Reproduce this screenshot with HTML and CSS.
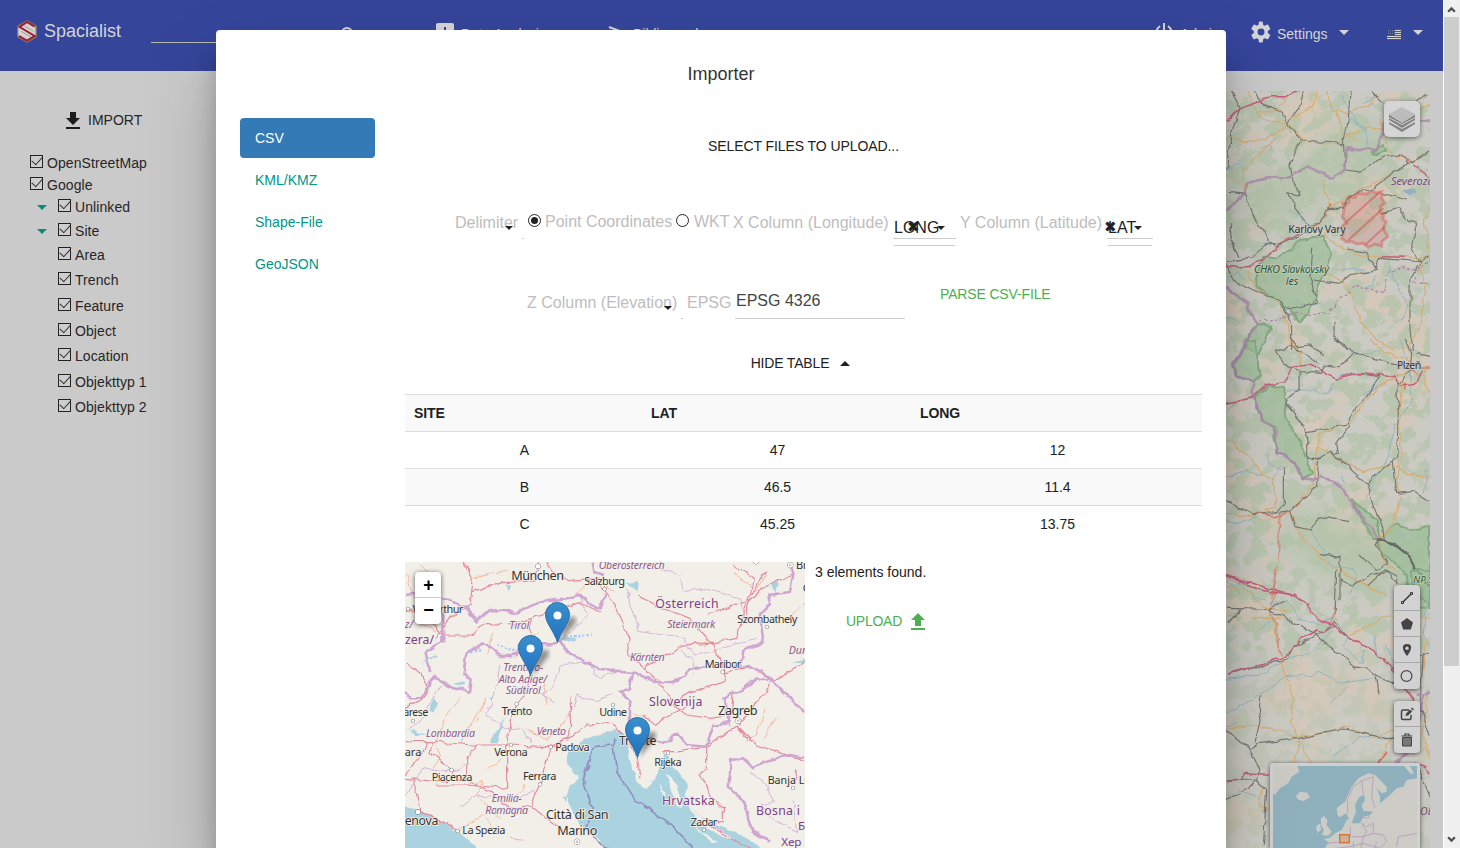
FILE: index.html
```html
<!DOCTYPE html>
<html lang="en">
<head>
<meta charset="utf-8">
<title>Spacialist</title>
<link rel="stylesheet" href="styles.css">
</head>
<body>
<div class="window">
  <div class="page">
    <header class="navbar">
      <svg class="brand-logo" viewBox="0 0 60 69"><path d="M30 1 59 17V52L30 68 1 52V17Z" fill="#a08a68"/><path d="M30 8 55 20V49L30 62 4 49V20Z" fill="#d5d2d2"/><path d="M4 20 30 5 56 20M4 49 30 64 56 49" fill="none" stroke="#8a6a58" stroke-width="6"/><path d="M52 19 30 6 8 21 53 48 30 62 6 48" fill="none" stroke="#981f34" stroke-width="6"/><path d="M12 34 42 51M22 18 50 34" stroke="#a08a68" stroke-width="2"/></svg>
      <span class="brand">Spacialist</span>
      <span class="search-line"></span>
      <svg class="search-icon" viewBox="0 0 18 18"><circle cx="7" cy="7" r="5" fill="none" stroke="#d4d4d8" stroke-width="2"/><path d="m11 11 6 6" stroke="#d4d4d8" stroke-width="2"/></svg>
      <a class="nav-item nav-analysis"><svg viewBox="0 0 18 18"><path d="M2 0H16Q18 0 18 2V16Q18 18 16 18H2Q0 18 0 16V2Q0 0 2 0Z" fill="#d4d4d8"/><path d="M5 8V14M9 4V14M13 10V14" stroke="#35459a" stroke-width="2"/></svg>Data Analysis</a>
      <a class="nav-item nav-library"><svg viewBox="0 0 18 18"><path d="M1 2 17 8M1 9 17 9M1 14 17 14" stroke="#d4d4d8" stroke-width="2"/></svg>Bibliography</a>
      <a class="nav-item nav-admin"><svg viewBox="0 0 18 18"><path d="M5 3A7.500 7.500 0 1 0 13 3M9 0V9" fill="none" stroke="#d4d4d8" stroke-width="2"/></svg>Admin</a>
      <a class="nav-item nav-settings"><svg viewBox="0 0 24 24"><path fill="#d4d4d8" d="M19.4 13a7.500 7.500 0 0 0 0-2l2.500-2a.6.6 0 0 0 .1-.8l-2.300-4a.6.6 0 0 0-.7-.3l-3 1.200a8 8 0 0 0-1.700-1L13.900 1a.6.600 0 0 0-.6-.5h-3a.6.6 0 0 0-.6.5L9.300 4.100a8 8 0 0 0-1.700 1L4.600 3.900a.6.6 0 0 0-.7.3l-2.300 4a.6.6 0 0 0 .1.8l2.500 2a8 8 0 0 0 0 2l-2.500 2a.6.600 0 0 0-.1.800l2.300 4c.1.300.4.300.700.200l3-1.200a8 8 0 0 0 1.700 1l.4 3.200c.1.300.300.500.600.500h3c.3 0 .600-.2.600-.5l.4-3.200a8 8 0 0 0 1.700-1l3 1.200c.3.100.6 0 .7-.2l2.300-4a.6.600 0 0 0-.1-.8zM12 15.800a3.800 3.800 0 1 1 0-7.600 3.800 3.800 0 0 1 0 7.600z"/></svg>Settings<i class="caret"></i></a>
      <a class="nav-item nav-lang"><svg class="flag" viewBox="0 0 14 11"><path fill="#d5d5d5" d="M0 0H14V11H0Z"/><path d="M0 .5H14M0 2.500H14M0 4.500H14M0 6.500H14M0 8.500H14M0 10.500H14" stroke="#a83440"/><path fill="#35457c" d="M0 0H8V6H0Z"/><path d="M1 1.500H8M1 3H8M1 4.500H8" stroke="#9ba3c4" stroke-width=".6" stroke-dasharray="1 1"/></svg><i class="caret"></i></a>
    </header>
    <main class="body">
      <aside class="sidebar">
        <a class="import"><svg viewBox="0 0 14 17"><path d="M4 0H10V6H14L7 13 0 6H4ZM0 15H14V17H0Z" fill="#1c1c1c"/></svg>IMPORT</a>
        <div class="tree">
          <label><input type="checkbox" checked>OpenStreetMap</label>
          <label><input type="checkbox" checked>Google</label>
          <label class="child"><i class="caret"></i><input type="checkbox" checked>Unlinked</label>
          <label class="child"><i class="caret"></i><input type="checkbox" checked>Site</label>
          <label class="child leaf"><input type="checkbox" checked>Area</label>
          <label class="child leaf"><input type="checkbox" checked>Trench</label>
          <label class="child leaf"><input type="checkbox" checked>Feature</label>
          <label class="child leaf"><input type="checkbox" checked>Object</label>
          <label class="child leaf"><input type="checkbox" checked>Location</label>
          <label class="child leaf"><input type="checkbox" checked>Objekttyp 1</label>
          <label class="child leaf"><input type="checkbox" checked>Objekttyp 2</label>
        </div>
      </aside>
      <section class="main-map">
        <svg class="map-canvas" viewBox="1226 91 204 757">
          <defs>
            <filter id="rough" x="-5%" y="-5%" width="110%" height="110%" color-interpolation-filters="sRGB"><feTurbulence type="fractalNoise" baseFrequency=".028" numOctaves="2" seed="4"/><feDisplacementMap in="SourceGraphic" scale="20" xChannelSelector="R" yChannelSelector="G"/></filter>
            <filter id="wood" x="0" y="0" width="100%" height="100%" color-interpolation-filters="sRGB"><feTurbulence type="fractalNoise" baseFrequency=".06" numOctaves="4" seed="12"/><feColorMatrix values="0 0 0 0 .706  0 0 0 0 .769  0 0 0 0 .667  0 0 0 12 -5.800"/><feComposite in2="SourceGraphic" operator="in"/></filter>
            <filter id="soil" x="0" y="0" width="100%" height="100%" color-interpolation-filters="sRGB"><feTurbulence type="fractalNoise" baseFrequency=".018" numOctaves="3" seed="31"/><feColorMatrix values="0 0 0 0 .827  0 0 0 0 .784  0 0 0 0 .725  0 0 0 6 -3"/></filter>
            <filter id="soft"><feGaussianBlur stdDeviation="12"/></filter>
          </defs>
          <rect x="1226" y="91" width="204" height="757" fill="#cbcac3"/>
          <rect x="1226" y="91" width="204" height="757" filter="url(#soil)"/>
          <g fill="#b4c4aa" filter="url(#soft)" opacity=".8"><path d="M1226 185 1300 165 1350 120 1400 130 1380 170 1330 190 1310 215 1260 225 1240 200ZM1290 500 1340 520 1385 540 1430 535V580L1350 590 1290 560Z"/></g>
          <rect x="1226" y="91" width="204" height="560" filter="url(#wood)" opacity=".75"/>
          <rect x="1226" y="651" width="204" height="197" filter="url(#wood)" opacity=".35"/>

          <g class="lines" transform="translate(1220 90) scale(.33333)" filter="url(#rough)">
            <path class="park" d="M108 565 130 500 165 505 205 480 240 450 310 440 335 500 300 580 280 640 240 700 205 655 150 620 110 590Z"/>
            <path class="park" d="M75 770 85 735 110 700 150 710 135 750 115 790Z"/>
            <path class="park" d="M455 188 490 165 498 180 470 195Z"/>
            <path class="water" d="M18 240 50 225 70 240M120 175 145 165 155 178M360 20 410 90 440 130 440 170M430 40 470 20M390 80 440 120M20 560 60 545 70 570M250 400 240 380 210 360M350 540 400 535 460 545M510 530 540 600 560 650 545 690M470 560 440 600M360 370 370 400M20 680 60 700M215 620 260 650 300 640"/>
            <path d="M125 460 155 455 150 465ZM550 300 590 295 595 308 565 318Z" fill="#8fb3c4"/>
            <path class="road" d="M80 0 100 50 130 90 200 100 240 70 280 50 290 0M18 135 80 155 130 150 180 120 200 100 250 150 350 165 400 130 440 110 500 125 560 90 630 40M320 0 340 60 380 70 440 50 480 10M350 60 370 130 410 150M75 310 70 240 110 200 170 140M200 20 170 60 110 70M310 270 325 330 320 360M310 430 370 480 430 500 520 498 630 505M300 545 360 570 400 620 420 690 470 750 520 780M80 540 110 600 180 640 205 700 215 780M590 505 620 600 600 700 560 780M480 90 510 190 570 215M630 350 610 400 630 480M335 350 420 300 520 250"/>
            <path class="red" d="M320 370 300 400 280 410M330 345 320 365M530 195 570 215 600 205"/>
            <path class="rail" d="M30 0 60 50 40 110 25 180 18 260M100 0 140 50 190 70 200 105 245 150 330 155 370 165 385 90 390 0M250 0 240 50 200 100M245 155 210 220 220 280 240 320 205 310 235 370 270 410 300 400 325 355 365 355 400 310 450 300 520 250 570 220 630 180M370 150 375 240 420 245 490 200 540 195 570 225M75 310 110 400 150 450 165 470 210 450 280 420M18 310 75 315M18 515 90 505 150 455 165 460M18 520 40 570 100 600 190 640 215 700 215 780M275 470 270 560 290 640 205 660M280 570 360 580 400 550 465 540 475 505 600 515 630 500M480 370 540 350 560 390 590 400 575 470 600 520 570 560 570 650 570 720 580 780M490 310 560 330M380 480 440 490 470 540M450 0 500 50 560 60 620 10M345 695 345 740 380 780M35 400 30 450 60 500"/>
            <path class="motor" d="M18 95 50 60 90 45 150 20 205 20 235 0M18 530 90 530 140 500 170 465 240 430M480 500 550 502M580 225 630 262"/>
            <path class="border" d="M18 365 40 340 75 310 85 275 140 265 210 265 260 225 340 265 370 240 380 175 470 180 500 90M18 595 50 620 80 640 90 670 115 700 80 745 75 780M600 90 630 85"/>
            <path class="dash" d="M120 695 180 690 220 670 330 670 350 630 410 590 490 610 500 550 550 530 590 545 580 580 630 580M590 540 630 510"/>
          </g>
          <g transform="translate(1220 90) scale(.33333)" stroke="#d34b4b">
            <path d="M372 360 368 340 385 338 388 320 405 322 410 310 440 312 455 303 470 310 485 305 485 325 494 340 482 348 480 365 492 372 488 388 498 395 490 415 503 440 485 455 485 468 465 462 445 472 430 460 410 462 395 454 380 456 365 445 372 425 362 412 380 400 368 380Z" fill="#d34b4b" fill-opacity=".16" stroke-opacity=".4" stroke-width="9"/>
            <path d="M375 400 480 305M385 450 490 355M435 465 495 410" stroke-opacity=".5" stroke-width="6"/>
          </g>
          <g class="lines" transform="translate(1220 340) scale(.33333)" filter="url(#rough)">
            <path class="park" d="M75 0 65 40 35 70 50 110 95 125 120 105 115 50 105 0Z"/>
            <path class="park" d="M103 175 150 135 190 145 200 240 240 310 280 400 245 415 225 370 170 340 160 265 125 240Z"/>
            <path class="park" d="M470 600 530 550 570 570 630 560V800H570L560 700 485 640Z"/>
            <path class="park" d="M395 480 470 540 480 600 460 600Z"/>
            <path class="water" d="M18 410 80 390 160 420 180 380 200 380M18 210 50 190M200 150 280 150 320 160 350 110 400 100M18 540 60 550 110 530M140 340 145 365 200 400M540 0 570 80 575 180 520 270 500 360 455 430 440 480M400 50 480 30M270 570 300 620 340 680 400 690 410 720 390 760M530 570 560 600M620 390 610 460M18 720 60 760M380 440 360 410M430 160 500 130"/>
            <path class="road" d="M18 300 90 350 130 410 160 420 165 500 90 530 18 520M210 0 240 40 240 90M450 0 500 40 560 60 620 90M570 90 490 125 430 190 390 250 300 280 290 350 280 430 210 520 250 600 350 690 480 760M295 325 380 370 430 395 520 370 560 400 630 415M530 140 545 350 530 430 540 470 520 560 480 590 490 670 530 690M550 110 545 170 530 210M610 100 630 180M490 690 440 740"/>
            <path class="red" d="M280 450 220 510 180 530 110 520M555 125 555 155M600 78 630 78M560 80 600 110"/>
            <path class="red thin" d="M180 520 175 650 155 780"/>
            <path class="rail" d="M165 35 200 80 240 95 300 100 310 75 360 80 400 40 470 55 560 80 600 70M165 35 215 20 300 70M215 0 230 20 270 15 310 45M345 0 400 35M555 0 575 40 570 90 530 140 535 220 530 350 440 430 360 360 330 340 295 355 260 355 260 275 240 240 195 190 200 175 240 150 240 95M260 275 380 255 410 200 440 170 480 110 410 100M390 255 350 310 355 340 330 345M18 480 100 525 170 515 190 500 190 380M175 520 210 515 240 490 290 440 295 360M210 520 225 560 270 570 300 530 390 545M440 430 460 500 485 560 490 600 465 610 500 670 470 695 420 645M300 640 360 650 360 780M500 690 530 710 530 740M520 360 530 460 580 455 630 485M590 40 630 50M500 685 440 740"/>
            <path class="motor" d="M18 190 95 175 140 135 190 125 220 80 270 75 350 115 410 100 520 110 540 135 590 130 610 90M18 705 90 730 150 750 200 755 245 785"/>
            <path class="border" d="M75 0 65 40 40 70 50 110 98 125 103 175 125 240 165 265 170 340 225 370 245 415 290 420 300 410 345 420 385 480 460 570 475 600"/>
            <path d="M475 600 520 610 560 640 590 690 630 740" fill="none" stroke="#646b64" stroke-width="8"/>
          </g>
          <g class="lines" transform="translate(1220 570) scale(.33333)" filter="url(#rough)">
            <path class="park" d="M575 0 580 60 630 100V0Z"/>
            <path class="water" d="M18 25 60 40 90 70 150 100 200 90 240 150 300 160 340 140 380 200 370 230 430 280 430 240M18 430 70 400 130 370 200 320 310 310 360 340 470 325 465 310M385 345 330 400M18 325 120 315 200 270 270 250 330 190M18 470 50 460M20 690 60 660 110 680M340 560 420 500 520 510M620 90 610 190 630 230M500 220 520 300M460 190 470 250M120 180 150 150"/>
            <path class="road" d="M18 50 80 60 130 110 200 120 160 150 170 200 185 270 220 390 215 460 240 510 220 580M18 480 90 465 180 480 240 510 270 580M390 190 440 170 500 135 630 145M430 40 500 80M530 490 500 530 470 580M130 650 120 710 150 720M185 145 100 145M620 200 610 300M400 480 470 500 520 480M620 360 610 500 630 560M240 500 330 485 390 470"/>
            <path class="red thin" d="M165 0 155 120 170 180 185 270M325 160 340 130 350 90"/>
            <path class="rail" d="M18 115 150 118 280 190 340 235 400 290 440 295 500 340 540 340M18 315 120 290 200 270 220 230 290 195 345 170M345 130 350 0M18 480 60 510 90 540 120 520 240 505 300 490 370 480 430 490 500 505 530 505M125 380 115 420 120 450 105 520M90 540 120 600 110 630 18 632M110 630 140 660 130 830M110 630 60 670 18 690M465 320 475 370M360 30 400 50 440 20 500 0 530 40M190 90 150 120M18 165 60 120M610 250 600 400 630 500M630 245 600 260M590 580 630 680M335 155 390 205"/>
            <path class="motor" d="M18 12 90 50 150 65 200 70 260 100 290 140 330 165 400 210 470 250 510 290 580 390 590 500M18 315 100 290 190 265 240 210 290 180 315 185 340 155M18 635 60 630 70 610 120 615 150 615M470 580 500 545M590 580 620 590 630 610"/>
            <path class="border" d="M590 375 630 370M610 370 600 430 560 540 530 580" stroke="#7e6590"/>
          </g>
          <g class="map-text dim" font-size="32">
            <g transform="translate(1220 90) scale(.33333)"><text x="205" y="428" textLength="172">Karlovy Vary</text><text class="park-name" x="102" y="549" textLength="225">CHKO Slavkovský</text><text class="park-name" x="197" y="584">les</text><text class="region" x="513" y="286" font-size="33">Severozápad</text></g>
            <g transform="translate(1220 340) scale(.33333)"><text x="531" y="87" textLength="73">Plzeň</text><text class="park-name" x="580" y="728" font-size="29">NP Š</text></g>
            <g transform="translate(1220 570) scale(.33333)"><text class="region" x="600" y="735">Oberösterreich</text></g>
          </g>
        </svg>
        <div class="layers"><svg viewBox="0 0 26 26"><path d="M0 18 13 26 26 18V16L13 23 0 16Z" fill="#858585"/><path d="M0 14 13 22 26 14V12L13 19 0 12Z" fill="#858585"/><path d="M0 9 13 17 26 9V8L13 1 0 8Z" fill="#bcbcbc"/><path d="M0 9 13 17 26 9V11L13 18 0 11Z" fill="#777"/></svg></div>
        <div class="tools draw-tools">
          <i><svg viewBox="0 0 14 14"><path d="M3 11 11 3" stroke="#333" stroke-width="1.500"/><path d="M1.500 10.500H3.500V12.500H1.500ZM10.500 1.500H12.500V3.500H10.500Z" fill="#ccc" stroke="#333"/></svg></i>
          <i><svg viewBox="0 0 14 14"><path d="M7 1 13 5.500 10.800 12.500H3.200L1 5.500Z" fill="#444"/></svg></i>
          <i><svg viewBox="0 0 14 14"><path d="M7 1C1 1 2 7 7 13 12 7 13 1 7 1Z" fill="#444"/><circle cx="7" cy="5.200" r="1.700" fill="#d0d0d0"/></svg></i>
          <i><svg viewBox="0 0 14 14"><circle cx="6.500" cy="7" r="5.400" fill="none" stroke="#444" stroke-width="1.200"/></svg></i>
        </div>
        <div class="tools edit-tools">
          <i><svg viewBox="0 0 14 14"><path d="M9 3H3Q1.500 3 1.500 4.500V11Q1.500 12.500 3 12.500H9.500Q11 12.500 11 11V8" fill="none" stroke="#444" stroke-width="1.500"/><path d="m5.500 9 .6-2.600 4-4 2 2-4 4ZM11 1.500l1-1 2 2-1 1Z" fill="#444"/></svg></i>
          <i><svg viewBox="0 0 14 14"><path d="M2.500 4.500H11.500V13H2.500Z" fill="#777" stroke="#444"/><path d="M1.500 3H12.500M5 2.500V1H9V2.500" fill="none" stroke="#444" stroke-width="1.200"/></svg></i>
        </div>
        <div class="overview"><svg viewBox="159 588 432 258">
          <rect x="159" y="588" width="432" height="258" fill="#8fb1bd"/>
          <g fill="#cccbc6">
            <path d="M159 588H232L238 605 215 620 205 640 180 655 165 675 159 670ZM228 678 240 665 262 668 270 682 250 693 232 688ZM303 745 312 738 322 750 320 765 335 785 325 797 305 795 312 780 303 765ZM288 770 300 760 303 780 292 788Z"/>
            <path d="M352 735 350 715 375 695 395 650 415 625 445 610 465 615 500 650 500 665 485 670 470 655 480 680 480 700 510 675 530 655 550 650 560 630 591 625V846H310L325 815 310 808 330 803 345 790 365 780 380 750 395 740 395 760 420 760 430 740 450 735 460 725 430 722 425 705 435 690 432 675 418 680 405 705 408 725 395 760 378 730 360 742Z"/>
            <path d="M553 588 570 610 582 612 570 588Z"/>
          </g>
          <path d="M383 730 382 690 400 650 425 632 430 675M425 632 460 620 455 680 465 715M420 740 445 745 450 725M425 760 440 770 460 760 460 790 490 795 500 815 480 835 430 820 390 830 345 835M390 770 392 800 365 815 320 820M530 830 535 800 591 790M395 800 430 800 440 785 425 760M400 815 400 846M460 790 430 800 420 846M470 815 460 846" fill="none" stroke="#b79bb9" stroke-width="2.500"/>
          <rect x="359" y="794" width="29" height="24" fill="#d5ad91" stroke="#c97935" stroke-width="4"/>
        </svg></div>
      </section>
    </main>
  </div>
  <div class="scrollbar"><svg viewBox="0 0 8 6"><path d="m1 5 3-3 3 3" fill="none" stroke="#505050" stroke-width="2"/></svg><div class="thumb"></div><svg viewBox="0 0 8 6"><path d="m1 1 3 3 3-3" fill="none" stroke="#505050" stroke-width="2"/></svg></div>
</div>

<div class="modal">
  <h1>Importer</h1>
  <div class="modal-body">
    <nav class="tabs"><a class="active">CSV</a><a>KML/KMZ</a><a>Shape-File</a><a>GeoJSON</a></nav>
    <div class="content">
      <div class="select-files">SELECT FILES TO UPLOAD...</div>
      <div class="form form-one">
        <span class="lbl delimiter">Delimiter<i class="caret over"></i></span><i class="stub"></i>
        <input type="radio" name="geo" checked><span class="lbl point">Point Coordinates</span>
        <input type="radio" name="geo"><span class="lbl wkt">WKT</span>
        <span class="lbl xcol">X Column (Longitude)</span>
        <span class="select long">LONG<b>✖</b><i class="caret"></i></span>
        <span class="lbl ycol">Y Column (Latitude)</span>
        <span class="select lat">LAT<b>✖</b><i class="caret"></i></span>
      </div>
      <div class="form form-two">
        <span class="lbl elevation">Z Column (Elevation)<i class="caret over"></i></span><i class="stub"></i>
        <span class="lbl epsg">EPSG</span><span class="epsg-input">EPSG 4326</span>
        <span class="parse">PARSE CSV-FILE</span>
      </div>
      <div class="hide-table">HIDE TABLE<i class="caret up"></i></div>
      <table>
        <tr><th class="c1">SITE</th><th class="c2">LAT</th><th>LONG</th></tr>
        <tr><td>A</td><td>47</td><td>12</td></tr>
        <tr><td>B</td><td>46.5</td><td>11.4</td></tr>
        <tr><td>C</td><td>45.25</td><td>13.75</td></tr>
      </table>
      <div class="result">
        <div class="mini-map">
          <svg class="map-canvas" viewBox="405 562 400 286">
            <defs>
              <filter id="rough2" x="-5%" y="-5%" width="110%" height="110%" color-interpolation-filters="sRGB"><feTurbulence type="fractalNoise" baseFrequency=".03" numOctaves="2" seed="9"/><feDisplacementMap in="SourceGraphic" scale="20" xChannelSelector="R" yChannelSelector="G"/></filter>
              <linearGradient id="pin" x2="0" y2="1"><stop stop-color="#3a8fcb"/><stop offset="1" stop-color="#2272c0"/></linearGradient>
              <filter id="pinblur"><feGaussianBlur stdDeviation="2"/></filter>
              <g id="marker"><path d="M2 0 16-17Q22-24 15-26 6-25 2 0Z" fill="#000" opacity=".4" filter="url(#pinblur)"/><path d="M0 0C-3-11-12-19-12-28A12 12 0 0 1 12-28C12-19 3-11 0 0Z" fill="url(#pin)" stroke="#2a6fa9"/><circle cy="-27" r="4" fill="#fff"/></g>
            </defs>
            <rect x="405" y="562" width="400" height="286" fill="#f2efe9"/>
            <g class="lines mini" transform="translate(400 555) scale(.33333)" filter="url(#rough2)">
              <path class="sea" d="M645 525 590 540 540 565 505 590 500 620 520 650 540 665 510 690 500 720 515 760 535 800 590 850 640 900 950 900 1100 900 1060 860 1000 830 910 790 870 760 860 720 860 690 830 650 810 610 790 590 780 640 760 680 740 705 720 690 700 650 685 610 690 570 670 535Z"/>
              <path class="sea" d="M0 745 40 760 80 775 130 800 170 830 210 860 250 900H0Z"/>
              <path d="M800 650 830 690 850 750 840 760 810 710ZM870 760 920 800 1000 850 980 850 900 810ZM780 680 790 720 800 725ZM870 810 950 860 940 865ZM880 730 900 750 890 755Z" fill="#f2efe9"/>
              <path class="lake" d="M315 490 300 530 290 565 275 565 275 545ZM100 430 115 440 100 475 90 465ZM190 535 200 530 180 575ZM30 530 45 525 75 540 50 540ZM320 85 335 90 325 110ZM160 390 200 380 190 395ZM450 240 530 250 520 260ZM1115 80 1135 75 1125 120ZM1180 320 1220 310 1215 322ZM680 85 720 78 715 110ZM485 730 500 720 500 740ZM65 330 105 300 110 305Z"/>
              <path d="M290 270 350 290M210 290 240 280M495 245 575 240M270 430 280 435" stroke="#a9c8fa" stroke-width="7" stroke-dasharray="7 6"/>
              <path class="minor" d="M60 30 100 60 90 110M220 70 260 60 320 50M130 240 60 210M280 230 260 300M420 230 370 260 380 340M530 120 580 70 640 110M180 430 130 500 110 570M200 530 260 430 230 500M430 380 440 450M510 480 440 560 380 520M100 560 120 600 100 640M200 690 250 680 230 720 300 790M310 610 260 640M700 480 740 480M1030 560 1070 540 1095 460M1090 550 1130 490M1170 190 1215 140M1000 50 1070 110 1100 60M20 60 40 130M750 360 800 390M840 270 940 260M180 820 250 780 300 840M350 720 380 690"/>
              <path class="highway" d="M190 20 220 70 215 110 310 80 400 75 420 20M215 110 210 150 150 190 110 250M15 170 60 160 130 240 210 240 250 205 340 210 390 190 470 165 540 140 600 170M390 190 395 270 400 350 360 440 330 500 320 570 320 700M15 460 60 440 90 400 60 350 20 330M15 560 90 560 220 570 330 570 450 575 510 550 560 510 640 505M15 660 70 590 80 560M100 560 90 590 160 650 270 710 330 760 390 750 420 690 450 580M390 750 450 800 510 840M230 570 200 610 200 670 110 680 15 670M40 670 60 770 130 800 180 830M320 700 200 690 110 690M510 430 515 510 500 560M440 20 470 60 510 80 600 70M600 90 650 160 690 250 680 300 730 340 780 310 850 270 930 265 1010 250 1040 150 1100 90 1180 60M715 120 760 150 870 190 940 270 970 340 980 380 910 400 870 410 820 450 860 480 930 490 1010 480M920 180 1040 140 1100 50M1000 30 1060 70 1040 180M730 340 770 380 820 440M860 455 790 490 770 515 730 480M970 350 1060 340 1120 380 1215 320M1120 380 1070 440 1050 480 1010 510 970 540 920 575 840 590 790 590M1010 510 1070 570 1215 620M1010 510 1040 550M920 575 920 640 900 665 930 720 970 760 970 800 930 800M640 510 690 560 710 610 720 670M1180 640 1190 670M930 810 990 850 1050 880M1000 410 990 510"/>
              <path class="province" d="M690 50 740 30 840 60 850 110 910 100 1020 130 1040 200M15 530 60 500 120 390M260 480 290 390 300 330M480 330 460 390 430 420 460 440M520 460 530 420 590 440 640 420M680 100 690 150 720 230 850 250 880 300 1070 250M130 650 180 640 200 620M130 650 70 640 20 720M180 760 230 720 360 730 420 700M260 480 310 520 370 520 390 560M480 330 560 320 600 370 650 350M320 840 370 860M840 280 880 320 880 360M1050 650 1100 690 1120 740 1080 750 1130 800 1190 830 1180 740M480 260 560 180 540 120"/>
              <path class="state" d="M15 120 60 115 100 130 130 180 130 260 80 290 90 350M130 130 200 160 230 200 270 165 350 170 430 140 500 130 530 120 600 160 615 120M15 410 30 430 60 430 90 390 100 365 160 400 210 410 215 370 190 360 200 290 250 265 300 300 350 300 360 270 400 265 470 265 480 250 500 290 600 345 700 350 760 380 820 385 870 345 950 330 1020 335 1030 290 1090 260 1080 180 1110 150 1105 120 1170 110 1180 60 1170 20M1020 335 1080 345 1120 380 1215 470M700 350 690 400 660 410 690 440 690 500 740 540 790 565 830 535 860 570 920 575 940 510 990 500 970 430 1020 410 1070 370 1120 380M1215 610 1170 600 1090 620 1060 640 1030 610 990 615 990 700 1030 740 1060 830 1110 860M575 20 580 50 610 60"/>
              <path class="seaborder" d="M645 545 640 580 650 650 700 730 800 800 860 860 900 900M640 570 580 575 550 690 580 760 560 820 590 860 650 890"/>
            </g>
            <g class="map-text" transform="translate(400 555) scale(.33333)" font-size="33">
              <g class="country"><text x="15" y="267" font-size="37">zera/</text><text x="766" y="158" textLength="190" font-size="37">Österreich</text><text x="747" y="454" textLength="160" font-size="37">Slovenija</text><text x="786" y="751" textLength="158" font-size="37">Hrvatska</text><text x="1068" y="781" textLength="132" font-size="37">Bosna i</text><text x="1194" y="826" font-size="35">Б</text><text x="1144" y="872" font-size="35">Хер</text></g>
              <g class="region" font-size="32"><text x="596" y="42" textLength="198">Oberösterreich</text><text x="328" y="223" textLength="60">Tirol</text><text x="802" y="219" textLength="144">Steiermark</text><text x="690" y="318" textLength="104">Kärnten</text><text x="310" y="347" textLength="120">Trentino-</text><text x="296" y="383" textLength="145">Alto Adige/</text><text x="317" y="418" textLength="105">Südtirol</text><text x="78" y="545" textLength="147">Lombardia</text><text x="410" y="539" textLength="88">Veneto</text><text x="275" y="740" textLength="90">Emilia-</text><text x="256" y="776" textLength="128">Romagna</text><text x="1166" y="298">Dunántúl</text><text x="14" y="220">z/</text></g>
              <text x="334" y="75" textLength="158" font-size="38">München</text><text x="553" y="90" textLength="122">Salzburg</text><text x="38" y="174" textLength="152">Winterthur</text><text x="1012" y="205" textLength="180">Szombathely</text><text x="914" y="339" textLength="110">Maribor</text><text x="305" y="480" textLength="92">Trento</text><text x="10" y="484" textLength="75">arese</text><text x="598" y="484" textLength="83">Udine</text><text x="955" y="480" textLength="118" font-size="38">Zagreb</text><text x="283" y="603" textLength="100">Verona</text><text x="466" y="588" textLength="103">Padova</text><text x="14" y="602">ara</text><text x="95" y="678" textLength="122">Piacenza</text><text x="369" y="675" textLength="100">Ferrara</text><text x="657" y="569" textLength="112" font-size="37">Trieste</text><text x="763" y="633" textLength="82">Rijeka</text><text x="1103" y="688" font-size="32">Banja Luka</text><text x="872" y="812" textLength="80">Zadar</text><text x="14" y="811" textLength="101" font-size="37">enova</text><text x="187" y="838" textLength="129">La Spezia</text><text x="438" y="792" textLength="188" font-size="38">Città di San</text><text x="472" y="839" textLength="120" font-size="38">Marino</text><text x="1188" y="41">Br</text><text x="1208" y="112">G</text>
              <g fill="#fff" stroke="#666" stroke-width="3"><circle cx="414" cy="34" r="7"/><circle cx="614" cy="102" r="5"/><circle cx="24" cy="162" r="5"/><circle cx="1101" cy="216" r="5"/><circle cx="968" cy="351" r="5"/><circle cx="350" cy="447" r="5"/><circle cx="639" cy="450" r="5"/><circle cx="39" cy="498" r="5"/><circle cx="333" cy="570" r="5"/><circle cx="452" cy="576" r="5"/><circle cx="155" cy="645" r="5"/><circle cx="420" cy="688" r="5"/><circle cx="804" cy="594" r="5"/><circle cx="1179" cy="699" r="5"/><circle cx="912" cy="825" r="5"/><circle cx="54" cy="771" r="7"/><circle cx="173" cy="828" r="5"/><circle cx="1014" cy="497" r="8"/><circle cx="1014" cy="497" r="2"/><circle cx="531" cy="860" r="8"/><circle cx="531" cy="860" r="2"/><circle cx="1171" cy="30" r="8"/><circle cx="1171" cy="30" r="2"/><circle cx="1068" cy="20" r="7"/></g>
            </g>
            <use href="#marker" x="557.500" y="642.500"/><use href="#marker" x="530.500" y="675.500"/><use href="#marker" x="637.500" y="757.500"/>
          </svg>
          <div class="zoom"><span>+</span><span>−</span></div>
        </div>
        <div class="summary"><div>3 elements found.</div><a class="upload">UPLOAD<svg viewBox="0 0 14 17"><path d="M7 0 14 7H10V13H4V7H0ZM0 15H14V17H0Z" fill="#4caf50"/></svg></a></div>
      </div>
    </div>
  </div>
</div>
</body>
</html>
```

FILE: styles.css
```css
* { box-sizing: border-box; }
body { margin: 0; height: 848px; overflow: hidden; position: relative; background: #cacaca; color: #212121; font: 14px/20px "Liberation Sans", Arial, sans-serif; }
svg { display: block; flex: none; }
.window { display: flex; height: 848px; }
.page { width: 1443px; display: flex; flex-direction: column; }
.caret { display: inline-block; flex: none; border: 5px solid transparent; border-top-color: currentColor; border-bottom: 0; }

.navbar { height: 71px; background: #35459a; color: #d4d4d8; display: flex; align-items: flex-start; padding-left: 17px; flex: none; }
.brand-logo { width: 20px; height: 23px; margin-top: 20px; }
.brand { font-size: 18px; margin: 21px 0 0 7px; width: 77px; }
.search-line { width: 180px; height: 1px; margin: 42px 0 0 30px; background: #b8b9af; }
.search-icon { width: 18px; height: 18px; margin: 26px 0 0 9px; }
.nav-item { display: flex; align-items: center; height: 20px; margin-top: 24px; white-space: nowrap; }
.nav-item svg { width: 18px; height: 18px; margin-right: 7px; }
.nav-analysis { margin-left: 78px; width: 172px; }
.nav-analysis svg { margin-top: -4px; }
.nav-library { width: 547px; }
.nav-admin { width: 95px; }
.nav-admin svg { margin-top: -4px; }
.nav-settings svg { width: 22px; height: 22px; margin: -4px 5px 0 0; }
.nav-settings .caret { margin: -3px 0 0 11px; }
.nav-lang { margin-left: 38px; }
.nav-lang .flag { width: 14px; height: 11px; margin: 0 12px 0 0; }
.nav-lang .caret { margin-top: -3px; }

.body { display: flex; flex: 1; min-height: 0; }
.sidebar { width: 1226px; padding-top: 39px; color: #262626; }
.import { display: flex; align-items: center; gap: 8px; padding-left: 66px; height: 20px; }
.import svg { width: 14px; height: 17px; }
.tree { display: grid; grid-template-rows: 22px 22px 24px 24px 25px 26px 25px 25px 26px 25px 22px; margin: 22px 0 0 30px; }
.tree label { display: flex; height: 22px; align-items: center; letter-spacing: .08px; }
.tree .child { padding-left: 7px; }
.tree .leaf { padding-left: 28px; }
.tree .caret { margin-right: 11px; color: #0a8a78; }
input[type=checkbox] { appearance: none; flex: none; width: 13px; height: 13px; margin: -3px 4px 0 0; border: 1px solid #222; background: #cecece; display: flex; justify-content: center; }
input[type=checkbox]::after { content: ""; width: 5px; height: 9px; border: solid #333; border-width: 0 1.4px 1.4px 0; transform: rotate(42deg) translate(-1px, -1px); }

.main-map { position: relative; width: 204px; height: 757px; margin-top: 20px; flex: none; overflow: hidden; }
.map-canvas { width: 100%; height: 100%; }
.lines path { stroke-linejoin: round; }
.lines .road, .lines .rail, .lines .motor, .lines .border, .lines .dash, .lines .red, .lines .water, .minor, .highway, .province, .state, .seaborder { fill: none; }
.water { stroke: #94b4c1; stroke-width: 3; }
.road { stroke: #d9ac70; stroke-width: 3.5; }
.red { stroke: #d2826d; stroke-width: 5; }
.thin { stroke-width: 4; opacity: .8; }
.rail { stroke: #777873; stroke-width: 3.5; }
.motor { stroke: #c4607b; stroke-width: 4.5; }
.border { stroke: #ac87ac; stroke-width: 8; opacity: .8; }
.dash { stroke: #ac87ac; stroke-width: 4; stroke-dasharray: 9 6; }
.park { fill: #9bbd98; fill-opacity: .65; stroke: #83aa80; stroke-width: 6; }
.map-text { font-family: "Noto Sans", sans-serif; fill: #333; stroke: #f2efe9; stroke-width: 5; paint-order: stroke; stroke-linejoin: round; }
.dim { stroke: #cbcac3; }
.map-text .region { font-style: italic; fill: #8d5a91; }
.dim .region { fill: #73507c; }
.map-text .country { fill: #7d3f86; }
.map-text .park-name { font-style: italic; fill: #265f2c; }
.minor { stroke: #f6b8a0; stroke-width: 3; }
.highway { stroke: #e58aa0; stroke-width: 3.6; }
.province { stroke: #d5b5d8; stroke-width: 3; }
.state { stroke: #cfa6d2; stroke-width: 7.5; }
.seaborder { stroke: #928fc0; stroke-width: 5; }
.sea, .lake { fill: #aad3df; }

.layers { position: absolute; left: 158px; top: 10px; width: 36px; height: 36px; padding: 5px; border-radius: 5px; background: #d5d5d5; box-shadow: 0 1px 5px rgba(0,0,0,.5); }
.layers svg { width: 26px; height: 26px; }
.tools { position: absolute; left: 168px; width: 26px; border-radius: 4px; background: #d2d2d2; box-shadow: 0 1px 5px rgba(0,0,0,.6); }
.draw-tools { top: 494px; }
.edit-tools { top: 610px; }
.tools i { display: flex; align-items: center; justify-content: center; height: 26px; border-bottom: 1px solid #a8a8a8; }
.tools i:last-child { border-bottom: 0; }
.tools svg { width: 14px; height: 14px; }
.overview { position: absolute; left: 44px; top: 672px; width: 150px; height: 85px; border: 3px solid #d0d0d0; border-bottom: 0; box-shadow: 0 1px 5px rgba(0,0,0,.6); border-radius: 3px 3px 0 0; background: #8fb1bd; overflow: hidden; }
.overview svg { width: 144px; height: 86px; }

.scrollbar { width: 17px; border-left: 1px solid #fff; background: #f0f0f0; display: flex; flex-direction: column; align-items: center; padding: 6px 1px 5px 0; }
.scrollbar svg { width: 9px; height: 7px; }
.thumb { width: 15px; height: 649px; margin: 4px 0 auto; background: #cdcdcd; }

.modal { position: absolute; left: 216px; top: 30px; width: 1010px; height: 818px; background: #fff; border-radius: 4px 4px 0 0; box-shadow: 0 27px 24px 0 rgba(0,0,0,.2), 0 40px 77px 0 rgba(0,0,0,.22); padding: 34px 24px 0; }
.modal h1 { margin: 0; font-size: 18px; line-height: 20px; font-weight: 400; text-align: center; color: #333; }
.modal-body { display: flex; gap: 30px; margin-top: 34px; }
.tabs { width: 135px; display: flex; flex-direction: column; gap: 2px; }
.tabs a { height: 40px; padding: 10px 15px; color: #009688; }
.tabs .active { background: #337ab7; color: #fff; border-radius: 4px; }
.content { width: 797px; padding-top: 18px; }
.select-files, .hide-table { text-align: center; letter-spacing: -.08px; }
.select-files { height: 20px; }
.form { display: flex; align-items: flex-start; font-size: 16px; height: 40px; white-space: nowrap; }
.lbl { color: #bdbdbd; flex: none; position: relative; padding-top: 1px; }
.form-one { margin-top: 56px; padding-left: 49px; }
.delimiter { width: 68px; padding-left: 1px; }
.over { position: absolute; border-width: 4px 4px 0; right: 9px; top: 14px; color: #212121; }
.stub { width: 2px; height: 1px; background: #ccc; margin-top: 26px; }
input[type=radio] { appearance: none; flex: none; width: 13px; height: 13px; border: 1px solid #222; border-radius: 50%; margin: 2px 4px 0; padding: 2px; }
input[type=radio]:checked::before { content: ""; display: block; width: 7px; height: 7px; border-radius: 50%; background: #222; }
.point { width: 127px; padding-top: 0; }
.wkt { width: 40px; padding: 0 0 0 1px; }
.xcol { width: 160px; }
.ycol { width: 146px; }
.select { position: relative; flex: none; height: 34px; padding-top: 6px; border-bottom: 1px solid #ccc; }
.select::before { content: ""; position: absolute; left: -1px; right: -1px; top: 26px; height: 1px; background: #ccc; }
.long { width: 61px; margin: 0 5px 0 1px; }
.lat { width: 44px; margin-left: 2px; }
.select b { position: absolute; left: 13px; top: 5px; font: bold 15px/20px "DejaVu Sans", sans-serif; }
.lat b { left: -4px; }
.select .caret { position: absolute; border-width: 4px 4px 0; right: 10px; top: 14px; }
.form-two { margin-top: 40px; padding-left: 122px; }
.elevation { width: 154px; }
.epsg { margin-left: 4px; width: 48px; }
.epsg-input { width: 170px; height: 28px; margin-top: -1px; padding-left: 1px; border-bottom: 1px solid #ccc; color: #444; }
.parse { font-size: 14px; letter-spacing: -.15px; color: #4caf50; margin: -8px 0 0 35px; }
.hide-table { margin-top: 21px; padding-right: 6px; letter-spacing: -.18px; }
.hide-table .caret { margin: 0 0 2px 11px; }
.up { transform: rotate(180deg); }
table { width: 797px; margin-top: 21px; border-collapse: separate; border-spacing: 0; table-layout: fixed; }
th, td { height: 37px; padding: 0 8px 1px; border-top: 1px solid #ddd; text-align: center; }
th { text-align: left; padding-left: 9px; letter-spacing: -.1px; }
td { padding-left: 10px; }
.c1 { width: 237px; }
.c2 { width: 269px; }
tr:nth-child(odd) { background: #f9f9f9; }
.result { display: flex; gap: 10px; margin-top: 20px; }
.mini-map { position: relative; width: 400px; height: 286px; overflow: hidden; }
.zoom { position: absolute; left: 10px; top: 10px; width: 26px; background: #fff; border-radius: 4px; box-shadow: 0 1px 5px rgba(0,0,0,.65); color: #000; font: bold 18px/26px "Liberation Sans", sans-serif; text-align: center; padding-left: 1px; }
.zoom span { display: block; height: 26px; }
.zoom span:first-child { border-bottom: 1px solid #ccc; margin-left: -1px; padding-left: 1px; }
.zoom span:last-child { line-height: 25px; }
.upload { display: flex; align-items: center; gap: 9px; margin: 29px 0 0 31px; color: #4caf50; letter-spacing: -.25px; }
.upload svg { width: 14px; height: 17px; }
```
